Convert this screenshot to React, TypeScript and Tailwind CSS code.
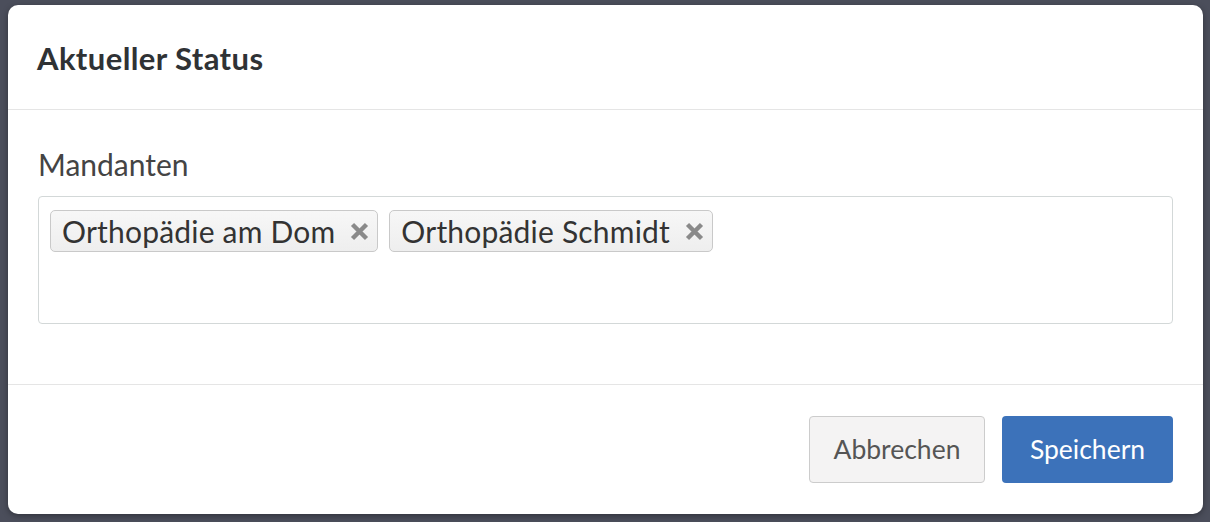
import React from "react";

function XIcon() {
  return (
    <svg width="19" height="19" viewBox="0 0 19 19" className="shrink-0">
      <path d="M2.5 2.5 L16.5 16.5 M16.5 2.5 L2.5 16.5" stroke="#8a8a8a" strokeWidth="4.4" strokeLinecap="butt" />
    </svg>
  );
}

function Tag({ label }: { label: string }) {
  return (
    <div className="flex h-[42px] items-center gap-[15px] rounded-[5px] border border-[#c9c9c9] bg-gradient-to-b from-[#f7f7f7] to-[#eeeeee] pl-[11px] pr-[8px] text-[30px] tracking-[0.2px] text-[#333333]">
      <span className="leading-none">{label}</span>
      <XIcon />
    </div>
  );
}

export default function App() {
  return (
    <div
      className="h-[522px] w-[1210px] bg-[#4b4e5b] pt-[5px] pl-[8px]"
      style={{ fontFamily: "Lato, 'Noto Sans', sans-serif" }}
    >
      <div className="flex h-[509px] w-[1195px] flex-col rounded-[10px] bg-white shadow-[0_2px_6px_rgba(0,0,0,0.35)]">
        <div className="flex h-[105px] items-center border-b border-[#e5e5e5] px-[29px] pt-[3px]">
          <h1 className="text-[31px] font-bold tracking-[0.4px] text-[#2f3235]">Aktueller Status</h1>
        </div>
        <div className="flex h-[274px] flex-col px-[30px] pt-[37px]">
          <label className="text-[30px] leading-[34px] text-[#444444]">Mandanten</label>
          <div className="mt-[15px] flex h-[128px] flex-wrap content-start gap-[11px] rounded-[4px] border border-[#d3d8d8] pl-[11px] pt-[13px]">
            <Tag label="Orthopädie am Dom" />
            <Tag label="Orthopädie Schmidt" />
          </div>
        </div>
        <div className="flex flex-1 items-start justify-end gap-[17px] border-t border-[#e5e5e5] px-[30px] pt-[31px]">
          <button className="flex h-[67px] w-[176px] items-center justify-center rounded-[4px] border border-[#cccccc] bg-[#f4f3f3] text-[26.5px] text-[#555555]">
            Abbrechen
          </button>
          <button className="flex h-[67px] w-[171px] items-center justify-center rounded-[4px] bg-[#3c72ba] text-[26.5px] text-white">
            Speichern
          </button>
        </div>
      </div>
    </div>
  );
}
